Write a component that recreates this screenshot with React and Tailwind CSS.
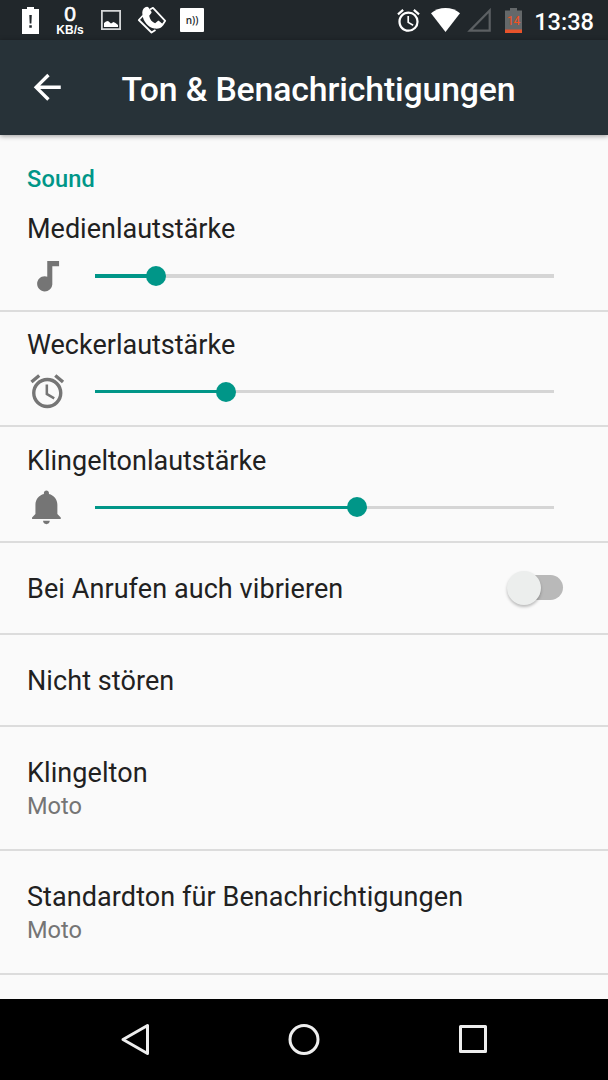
import React, { useState } from 'react';
import { MdAlarm, MdArrowBack } from 'react-icons/md';

const volumes = [
    { id: 'media', label: 'Medienlautstärke', icon: NoteIcon, value: 2, max: 15, height: 'h-[115.7px]' },
    { id: 'alarm', label: 'Weckerlautstärke', icon: AlarmIcon, value: 2, max: 7, height: 'h-[115.7px]' },
    { id: 'ring', label: 'Klingeltonlautstärke', icon: BellIcon, value: 4, max: 7, height: 'h-[115.6px]' },
];

function NoteIcon() {
    return (
        <svg viewBox="0 0 24 24" className="size-[40.5px] fill-[#757575]">
            <path d="M12 3v9.28c-.47-.17-.97-.28-1.5-.28C8.01 12 6 14.01 6 16.5S8.01 21 10.5 21c2.31 0 4.2-1.75 4.45-4H15V6h4V3h-7z" />
        </svg>
    );
}

function AlarmIcon() {
    return <MdAlarm className="size-[40.5px] text-[#757575]" />;
}

function BellIcon() {
    return (
        <svg viewBox="0 0 24 24" className="size-[40.5px] fill-[#757575]">
            <path d="M11.5 22c1.1 0 2-.9 2-2h-4c0 1.1.9 2 2 2zm6.5-6v-5.5c0-3.07-2.13-5.64-5-6.32V3.5c0-.83-.67-1.5-1.5-1.5S10 2.67 10 3.5v.68c-2.87.68-5 3.25-5 6.32V16l-2 2v1h17v-1l-2-2z" />
        </svg>
    );
}

function StatusBar() {
    return (
        <div className="h-[40px] shrink-0 bg-[#21272b] flex items-center justify-between pl-[22px] pr-[14px] text-white">
            <div className="flex items-center">
                <svg width="17" height="27" viewBox="0 0 17 27">
                    <path d="M5 0h7v2h5v25H0V2h5z" fill="#fff" />
                    <path d="M7.3 8h2.5l-.4 8.5H7.7zM7.3 18.3h2.5v2.5H7.3z" fill="#21272b" />
                </svg>
                <div className="ml-[16px] w-[30px] flex flex-col items-center font-['Liberation_Sans']">
                    <span className="text-[21px] leading-[20px] [-webkit-text-stroke:0.6px_#fff]">0</span>
                    <span className="text-[12px] leading-[12px] font-bold">KB/s</span>
                </div>
                <svg width="20" height="20" viewBox="0 0 20 20" className="ml-[16px]">
                    <path d="M.9.9h18.2v18.2H.9z" fill="none" stroke="#d4d6d7" strokeWidth="1.8" />
                    <path d="M3 17v-4l2-1.5 2-.5 3 2.5 2.5-1.5 2 1 2.5 2v2z" fill="#fff" />
                </svg>
                <svg width="30" height="28" viewBox="0 0 30 28" className="ml-[16px]">
                    <path d="M6 9.5L1.8 14l12.7 12.5 4-2.5M13 3.5l3-1.7 12.2 13-3 4.5" fill="none" stroke="#fff" strokeWidth="1.8" strokeLinejoin="round" />
                    <path d="M8.2 1.2C5.7 2.6 5 5.4 5.4 8.6c.9 7.3 5.6 13 12.2 14 3.3.5 6.8-.4 8.2-2.8.4-.8.2-1.4-.4-2l-3-2.6c-.6-.5-1.3-.5-1.9 0l-2.4 2.1c-3.2-1.3-5.3-4-5.9-7.6l2-2.4c.5-.6.5-1.2.1-1.9L11.7 1.7c-.7-1.3-2.1-1.3-3.5-.5z" fill="#fff" />
                </svg>
                <div className="ml-[13px] size-[24px] rounded-[1px] bg-white text-[#21272b] flex items-center justify-center font-['Open_Sans'] font-semibold text-[10px] leading-none">
                    n))
                </div>
            </div>
            <div className="flex items-center">
                <MdAlarm className="size-[27px] mr-[9px]" />
                <svg width="29" height="24" viewBox="0 0 29 24">
                    <path d="M0 5.2C4 1.8 9 0 14.5 0S25 1.8 29 5.2L14.5 24z" fill="#fff" />
                </svg>
                <svg width="24" height="24" viewBox="0 0 24 24" className="ml-[7px]">
                    <path d="M22.7 2.5v20.2H2.8z" fill="none" stroke="#5c6063" strokeWidth="2.2" />
                </svg>
                <div className="ml-[14px] relative w-[17px] h-[25px]">
                    <svg width="17" height="25" viewBox="0 0 17 25">
                        <path d="M5 0h7v2.5h5V25H0V2.5h5z" fill="#64686a" />
                        <path d="M0 21.5h17V25H0z" fill="#e8532b" />
                    </svg>
                    <span className="absolute inset-x-0 top-[6px] text-center font-['Roboto'] text-[12px] leading-[14px] text-[#f4511e]">14</span>
                </div>
                <span className="ml-[12px] font-['Roboto'] font-medium text-[23.6px] leading-[28px] mt-[3px]">13:38</span>
            </div>
        </div>
    );
}

function Header() {
    return (
        <header className="relative z-10 h-[95px] shrink-0 bg-[#273238] flex items-center pl-[27px] shadow-[0_1px_5px_rgba(0,0,0,0.4)]">
            <button type="button" className="text-white">
                <MdArrowBack className="size-[40.5px]" />
            </button>
            <h1 className="ml-[54px] mt-[5px] text-[33.8px] leading-[40px] tracking-[-0.14px] font-medium text-white whitespace-nowrap">
                Ton &amp; Benachrichtigungen
            </h1>
        </header>
    );
}

function VolumeRow({ label, icon: Icon, value, max, height }) {
    const percent = `${(value / max) * 100}%`;

    return (
        <div className={`${height} pt-[17.4px] pl-[27px] border-b-2 border-[#dcdcdc]`}>
            <p className="text-[27px] leading-[32px] text-[#212121]">{label}</p>
            <div className="mt-[10.4px] flex items-center">
                <Icon />
                <div className="relative ml-[27px] w-[459px] h-[3.4px] bg-[#d5d5d5]">
                    <div className="h-full bg-[#009688]" style={{ width: percent }} />
                    <div className="absolute top-1/2 size-[20px] -translate-1/2 rounded-full bg-[#009688]" style={{ left: percent }} />
                </div>
            </div>
        </div>
    );
}

function SettingRow({ label, summary, height, children }) {
    return (
        <div className={`${height} px-[27px] flex items-center justify-between border-b-2 border-[#dcdcdc]`}>
            <div className="pt-[3px]">
                <p className="text-[27px] leading-[32px] tracking-[0.08px] text-[#212121]">{label}</p>
                {summary && <p className="mt-[3px] text-[23.6px] leading-[29px] text-[#757575]">{summary}</p>}
            </div>
            {children}
        </div>
    );
}

function Toggle({ checked, onChange }) {
    return (
        <button type="button" role="switch" aria-checked={checked} onClick={onChange} className="relative mr-[18px] w-[52px] h-[25px] rounded-full bg-[#b9b9b9]">
            <span className={`absolute -top-[4.5px] size-[34px] rounded-full shadow-[0_2px_3px_rgba(0,0,0,0.25)] ${checked ? 'right-[-4px] bg-[#009688]' : 'left-[-4px] bg-[#eceeed]'}`} />
        </button>
    );
}

function NavBar() {
    return (
        <nav className="h-[81px] shrink-0 bg-black flex items-center justify-center gap-[136px]">
            <svg width="33" height="33" viewBox="0 0 33 33" fill="none" stroke="#eee" strokeWidth="3" strokeLinejoin="round">
                <path d="M28.5 2.5v28L4 16.5z" />
            </svg>
            <svg width="33" height="33" viewBox="0 0 33 33" fill="none" stroke="#eee" strokeWidth="3">
                <circle cx="16" cy="16.5" r="14" />
            </svg>
            <svg width="33" height="33" viewBox="0 0 33 33" fill="none" stroke="#eee" strokeWidth="3" strokeLinejoin="round">
                <path d="M3.5 3.5h25v25h-25z" />
            </svg>
        </nav>
    );
}

export default function App() {
    const [vibrate, setVibrate] = useState(false);

    return (
        <div className="w-[608px] h-[1080px] flex flex-col overflow-hidden bg-[#fafafa] font-['Roboto',sans-serif]">
            <StatusBar />
            <Header />
            <main className="flex-1 min-h-0 overflow-hidden">
                <h2 className="h-[61px] pt-[30px] pl-[27px] text-[23.6px] leading-[28px] tracking-[0.15px] font-medium text-[#009688]">Sound</h2>
                {volumes.map((volume) => (
                    <VolumeRow key={volume.id} {...volume} />
                ))}
                <SettingRow label="Bei Anrufen auch vibrieren" height="h-[91.8px]">
                    <Toggle checked={vibrate} onChange={() => setVibrate(!vibrate)} />
                </SettingRow>
                <SettingRow label="Nicht stören" height="h-[92px]" />
                <SettingRow label="Klingelton" summary="Moto" height="h-[124px]" />
                <SettingRow label="Standardton für Benachrichtigungen" summary="Moto" height="h-[124px]" />
            </main>
            <NavBar />
        </div>
    );
}
